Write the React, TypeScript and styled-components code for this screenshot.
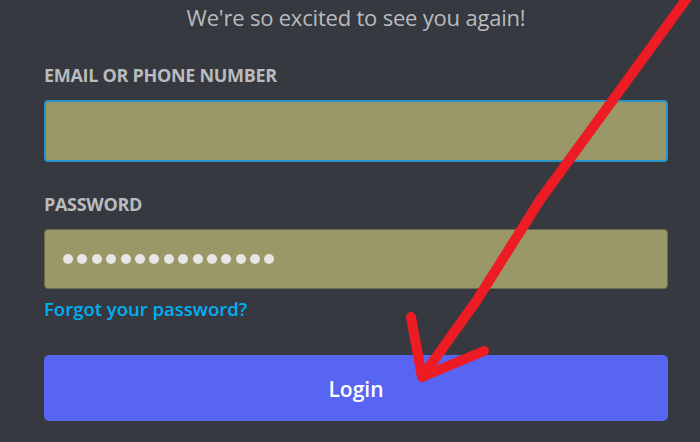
import styled, { createGlobalStyle } from "styled-components";

const GlobalStyle = createGlobalStyle`
  html, body {
    margin: 0;
    padding: 0;
    background: #36393f;
  }
  body {
    font-family: "Open Sans", "Noto Sans", sans-serif;
  }
`;

const Page = styled.div`
  position: relative;
  width: 700px;
  height: 442px;
  overflow: hidden;
  background: #36393f;
`;

const Form = styled.form`
  display: flex;
  flex-direction: column;
  padding: 3px 32px 0 44px;
`;

const Subtitle = styled.div`
  text-align: center;
  font-size: 22px;
  line-height: 28px;
  color: #b9bbbe;
  letter-spacing: -0.2px;
`;

const Label = styled.label<{ $top: number }>`
  margin-top: ${(p) => p.$top}px;
  font-size: 18px;
  line-height: 22px;
  font-weight: 700;
  color: #b9bbbe;
  text-transform: uppercase;
  letter-spacing: -0.3px;
`;

const Field = styled.div<{ $focused?: boolean; $height: number }>`
  box-sizing: border-box;
  display: flex;
  align-items: center;
  height: ${(p) => p.$height}px;
  margin-top: 14px;
  padding: 0 16px;
  background: #9a9868;
  border-radius: 4px;
  border: ${(p) => (p.$focused ? "2px solid #2a93c7" : "1px solid #6e6c4a")};
`;

const Dots = styled.div`
  display: flex;
  gap: 4.4px;
  padding-left: 2px;
`;

const Dot = styled.span`
  width: 10px;
  height: 10px;
  border-radius: 50%;
  background: #e6e6e6;
`;

const Forgot = styled.a`
  margin-top: 8px;
  font-size: 18.5px;
  line-height: 24px;
  font-weight: 600;
  color: #00aff4;
  text-decoration: none;
  align-self: flex-start;
`;

const LoginButton = styled.button`
  margin-top: 34px;
  height: 66px;
  border: none;
  border-radius: 5px;
  background: #5865f2;
  color: #ffffff;
  font-family: inherit;
  font-size: 21px;
  font-weight: 600;
  cursor: pointer;
  padding-top: 2px;
`;

const Arrow = styled.svg`
  position: absolute;
  inset: 0;
  pointer-events: none;
`;

export default function App() {
  return (
    <Page>
      <GlobalStyle />
      <Form onSubmit={(e) => e.preventDefault()}>
        <Subtitle>We're so excited to see you again!</Subtitle>
        <Label $top={33}>Email or Phone Number</Label>
        <Field $focused $height={62} />
        <Label $top={31}>Password</Label>
        <Field $height={60}>
          <Dots>
            {Array.from({ length: 15 }).map((_, i) => (
              <Dot key={i} />
            ))}
          </Dots>
        </Field>
        <Forgot href="#">Forgot your password?</Forgot>
        <LoginButton type="submit">Login</LoginButton>
      </Form>
      <Arrow width="700" height="442" viewBox="0 0 700 442">
        <path
          d="M690 -6 L540 200 L477 300 L422 377"
          fill="none"
          stroke="#ed1c24"
          strokeWidth="10"
          strokeLinecap="round"
          strokeLinejoin="round"
        />
        <path
          d="M411 317 L422 377 L484 351"
          fill="none"
          stroke="#ed1c24"
          strokeWidth="10"
          strokeLinecap="round"
          strokeLinejoin="round"
        />
      </Arrow>
    </Page>
  );
}
